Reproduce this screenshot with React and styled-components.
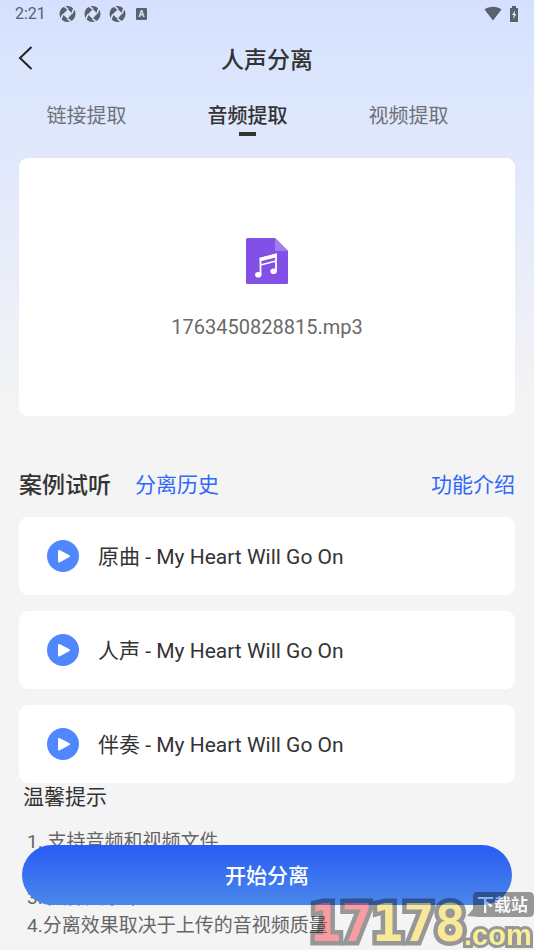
import React, { useState } from "react";
import styled, { createGlobalStyle } from "styled-components";

const GlobalStyle = createGlobalStyle`
  * {
    box-sizing: border-box;
  }
  body {
    margin: 0;
    background: #f4f4f4;
    color: #333;
    font-family: Roboto, "Noto Sans CJK SC", sans-serif;
  }
  button {
    padding: 0;
    border: none;
    background: none;
    color: inherit;
    font: inherit;
    cursor: pointer;
  }
  h1, h2, p, ul, ol {
    margin: 0;
    padding: 0;
  }
`;

const Page = styled.div`
  height: 100vh;
  overflow: hidden;
  background: linear-gradient(#d5e0ff 0, #dce7fd 92px, #e1e8fc 160px, #f4f4f4 410px);
`;

const StatusBar = styled.div`
  display: flex;
  align-items: center;
  justify-content: space-between;
  height: 27px;
  padding: 0 15px;
  color: #5a606c;
  font-size: 16px;
`;

const StatusGroup = styled.div`
  display: flex;
  align-items: center;
  gap: ${(props) => props.$gap}px;

  span {
    margin-right: 5px;
  }
  svg {
    display: block;
  }
`;

const Header = styled.header`
  display: grid;
  grid-template-columns: 48px 1fr 48px;
  align-items: center;
  height: 61px;

  h1 {
    text-align: center;
    font-size: 23px;
    font-weight: 500;
  }
`;

const BackButton = styled.button`
  height: 48px;
  padding-left: 18px;
  text-align: left;

  svg {
    display: block;
  }
`;

const Tabs = styled.nav`
  display: flex;
  height: 70px;
  padding: 12px 45px 0 6px;
`;

const Tab = styled.button`
  flex: 1;
  display: flex;
  flex-direction: column;
  align-items: center;
  height: 36px;
  font-size: 20px;
  line-height: 32px;
  font-weight: ${(props) => (props.$active ? 500 : 400)};
  color: ${(props) => (props.$active ? "#333" : "#6f7277")};

  &::after {
    content: "";
    width: 17px;
    height: 4px;
    background: ${(props) => (props.$active ? "#333" : "transparent")};
  }
`;

const Main = styled.main`
  padding: 0 19px;
`;

const FileCard = styled.button`
  display: flex;
  flex-direction: column;
  align-items: center;
  width: 100%;
  height: 258px;
  padding-top: 80px;
  gap: 29px;
  border-radius: 9px;
  background: #fff;
  color: #6a6a6a;
  font-size: 20px;
  line-height: 28px;
`;

const SectionHead = styled.div`
  display: flex;
  align-items: center;
  gap: 24px;
  margin-top: 49px;
  height: 36px;

  h2 {
    font-size: 23px;
    font-weight: 500;
  }
  a {
    color: #3268fa;
    font-size: 21px;
    text-decoration: none;
  }
  a:last-child {
    margin-left: auto;
  }
`;

const SongList = styled.ul`
  display: flex;
  flex-direction: column;
  gap: 16px;
  margin-top: 16px;
  list-style: none;
`;

const Song = styled.li`
  display: flex;
  align-items: center;
  gap: 19px;
  height: 78px;
  padding: 0 28px;
  border-radius: 9px;
  background: #fff;
  font-size: 21px;

  span {
    padding-bottom: 2px;
  }
`;

const PlayButton = styled.button`
  svg {
    display: block;
  }
`;

const Tips = styled.section`
  padding-left: 4px;

  h2 {
    font-size: 21px;
    font-weight: 400;
    line-height: 28px;
  }
  ol {
    margin-top: 17px;
    padding-left: 4px;
    list-style: none;
    color: #666;
    font-size: 19px;
    line-height: 28px;
  }
`;

const StartButton = styled.button`
  && {
    position: fixed;
    left: 22px;
    right: 22px;
    bottom: 45px;
    height: 60px;
    padding-bottom: 2px;
    border-radius: 30px;
    background: linear-gradient(#285cf4, #4b87ea);
    color: #fff;
    font-size: 21px;
    font-weight: 500;
  }
`;

const Watermark = styled.svg`
  position: fixed;
  right: 0;
  bottom: 0;
  opacity: 0.4;
  pointer-events: none;
  font-weight: 700;
  paint-order: stroke;
  stroke-linejoin: miter;
`;

const tabs = ["链接提取", "音频提取", "视频提取"];
const songs = ["原曲", "人声", "伴奏"];
const tips = [
  "1. 支持音频和视频文件",
  "2. 支持常见音视频格式",
  "3. 文件大小不超过50M",
  "4.分离效果取决于上传的音视频质量",
];

function ShutterIcon() {
  return (
    <svg width="17" height="16" viewBox="0 0 16 16">
      <circle cx="8" cy="8" r="8" fill="currentColor" />
      <path d="M8.400 3.200L12.800 7.600 8 12.800 3.200 8.200Z" fill="#dae4fe" />
      <path
        d="M8.600 3.400L4.400 0M12.600 7.400L14.600 1.800M8 12.600L12 16M3.400 8.400L1 14"
        stroke="#dae4fe"
        strokeWidth="1.600"
      />
    </svg>
  );
}

function App() {
  const [active, setActive] = useState(1);

  return (
    <>
      <GlobalStyle />
      <Page>
        <StatusBar>
          <StatusGroup $gap={8}>
            <span>2:21</span>
            <ShutterIcon />
            <ShutterIcon />
            <ShutterIcon />
            <svg width="16" height="12" viewBox="0 0 16 12">
              <rect x="2" width="11" height="12" rx="1" fill="currentColor" />
              <text x="7.5" y="9" textAnchor="middle" fontSize="9" fontWeight="700" fill="#dce5fd">
                A
              </text>
            </svg>
          </StatusGroup>
          <StatusGroup $gap={7}>
            <svg width="18" height="15" viewBox="0 0 18 15" fill="currentColor">
              <path d="M.5 3.4C5-.2 13-.2 17.500 3.400L9 14.500Z" />
            </svg>
            <svg width="10" height="16" viewBox="0 0 10 16">
              <path d="M3 0h4v2h2v14H1V2h2z" fill="currentColor" />
              <path d="M6.200 4L3 9h1.800L4.200 13 7.400 8H5.600z" fill="#dce5fd" />
            </svg>
          </StatusGroup>
        </StatusBar>

        <Header>
          <BackButton aria-label="返回">
            <svg width="16" height="24" viewBox="0 0 16 24" fill="none" stroke="#222" strokeWidth="2">
              <path d="M13.500 1L2 12l11.500 11" />
            </svg>
          </BackButton>
          <h1>人声分离</h1>
        </Header>

        <Tabs>
          {tabs.map((name, idx) => (
            <Tab key={name} $active={idx === active} onClick={() => setActive(idx)}>
              {name}
            </Tab>
          ))}
        </Tabs>

        <Main>
          <FileCard>
            <svg width="42" height="46" viewBox="0 0 42 46">
              <path d="M1.500 0H29L42 13v31.500q0 1.500-1.500 1.500h-39Q0 46 0 44.500v-43Q0 0 1.500 0Z" fill="#824fe7" />
              <path d="M29 0L42 13H29Z" fill="#a17ced" />
              <path d="M14.500 37V20.500L30 16.500V33M14.500 27L30 23" fill="none" stroke="#fff" strokeWidth="1.800" />
              <path d="M13.600 20L30.900 15.600V19.200L13.600 23.600Z" fill="#fff" />
              <ellipse cx="12.300" cy="36.800" rx="3.200" ry="2.800" fill="#fff" />
              <ellipse cx="27.600" cy="33.200" rx="3.200" ry="2.800" fill="#fff" />
            </svg>
            <span>1763450828815.mp3</span>
          </FileCard>

          <SectionHead>
            <h2>案例试听</h2>
            <a href="#history">分离历史</a>
            <a href="#intro">功能介绍</a>
          </SectionHead>

          <SongList>
            {songs.map((name) => (
              <Song key={name}>
                <PlayButton aria-label={`播放${name}`}>
                  <svg width="32" height="32" viewBox="0 0 32 32">
                    <circle cx="16" cy="16" r="16" fill="#5087ff" />
                    <path
                      d="M12 11v10.500L22 16.200Z"
                      fill="#fff"
                      stroke="#fff"
                      strokeWidth="2"
                      strokeLinejoin="round"
                    />
                  </svg>
                </PlayButton>
                <span>{name} - My Heart Will Go On</span>
              </Song>
            ))}
          </SongList>

          <Tips>
            <h2>温馨提示</h2>
            <ol>
              {tips.map((tip) => (
                <li key={tip}>{tip}</li>
              ))}
            </ol>
          </Tips>
        </Main>

        <StartButton>开始分离</StartButton>

        <Watermark width="224" height="60" viewBox="0 0 224 60">
          <g fontFamily="DejaVu Sans Mono, monospace" fontSize="52" stroke="#0e0e0e" strokeWidth="9">
            <text x="0" y="51" fill="#ff1b28">17</text>
            <text x="62" y="51" fill="#ffd70f">178</text>
          </g>
          <path d="M167 2h52q5 0 5 5v15q0 5-5 5h-50l-12-1 6-7V7q0-5 4-5Z" fill="#0e0e0e" />
          <text x="167" y="21" fontFamily="Noto Sans CJK SC, sans-serif" fontSize="17" fill="#fff">
            下载站
          </text>
          <text
            x="154"
            y="55"
            fontFamily="Liberation Sans, sans-serif"
            fontSize="29"
            fill="#ffe60f"
            stroke="#0e0e0e"
            strokeWidth="6"
          >
            .com
          </text>
        </Watermark>
      </Page>
    </>
  );
}

export default App;
